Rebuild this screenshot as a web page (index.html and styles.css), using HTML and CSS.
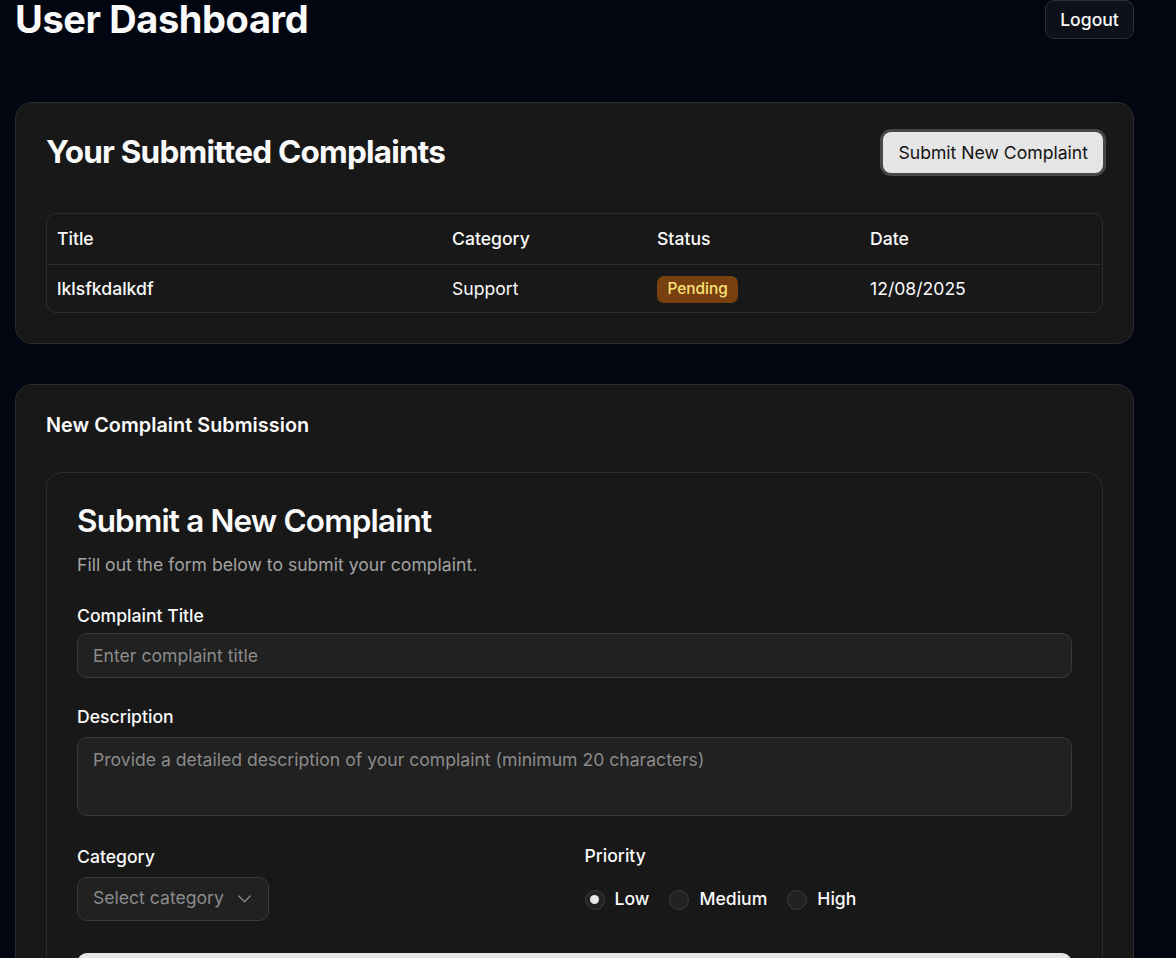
FILE: index.html
```html
<!DOCTYPE html>
<html lang="en">
<head>
<meta charset="utf-8">
<title>User Dashboard</title>
<link rel="stylesheet" href="styles.css">
</head>
<body>
<div class="page">
  <header class="topbar">
    <h1 class="page-title">User Dashboard</h1>
    <button class="btn-logout" type="button">Logout</button>
  </header>

  <section class="card card-complaints">
    <div class="card-head">
      <h2 class="card-title-lg">Your Submitted Complaints</h2>
      <button class="btn-light" type="button">Submit New Complaint</button>
    </div>
    <div class="table">
      <div class="trow thead">
        <div class="cell">Title</div>
        <div class="cell">Category</div>
        <div class="cell">Status</div>
        <div class="cell">Date</div>
      </div>
      <div class="trow tbody">
        <div class="cell cell-strong">lklsfkdalkdf</div>
        <div class="cell">Support</div>
        <div class="cell"><span class="badge-pending">Pending</span></div>
        <div class="cell">12/08/2025</div>
      </div>
    </div>
  </section>

  <section class="card card-new">
    <h3 class="card-title-sm">New Complaint Submission</h3>
    <div class="inner-card">
      <h2 class="form-title">Submit a New Complaint</h2>
      <p class="form-sub">Fill out the form below to submit your complaint.</p>
      <form class="form">
        <div class="field field-title">
          <label class="label" for="title">Complaint Title</label>
          <input class="input" id="title" type="text" placeholder="Enter complaint title">
        </div>
        <div class="field field-desc">
          <label class="label" for="desc">Description</label>
          <textarea class="textarea" id="desc" placeholder="Provide a detailed description of your complaint (minimum 20 characters)"></textarea>
        </div>
        <div class="two-col">
          <div class="field field-cat">
            <label class="label">Category</label>
            <div class="select">
              <span class="select-text">Select category</span>
              <svg class="chev" width="13" height="8" viewBox="0 0 13 8"><polyline points="0.8,1 6.5,6.7 12.2,1" fill="none" stroke="#8a8a8a" stroke-width="1.3" stroke-linecap="round" stroke-linejoin="round"/></svg>
            </div>
          </div>
          <div class="field field-pri">
            <span class="label label-pri">Priority</span>
            <div class="radios">
              <span class="radio-item"><span class="radio radio-on"></span><span class="radio-label">Low</span></span>
              <span class="radio-item"><span class="radio"></span><span class="radio-label">Medium</span></span>
              <span class="radio-item"><span class="radio"></span><span class="radio-label">High</span></span>
            </div>
          </div>
        </div>
        <button class="btn-submit" type="button">Submit Complaint</button>
      </form>
    </div>
  </section>
</div>
</body>
</html>
```

FILE: styles.css
```css
html { scrollbar-width: none; }
* { box-sizing: border-box; }
body {
  margin: 0;
  background: #020611;
  color: #fafafa;
  font-family: "Inter", "Noto Sans", sans-serif;
  font-size: 17.6px;
  line-height: 26.4px;
}
.page {
  width: 1119px;
  margin-left: 15px;
  padding-bottom: 40px;
}
.topbar {
  display: flex;
  justify-content: space-between;
  align-items: flex-start;
  height: 40px;
}
.page-title {
  margin: -1px 0 0 0;
  font-size: 38px;
  line-height: 40px;
  font-weight: 700;
  letter-spacing: -0.4px;
}
.btn-logout {
  height: 39px;
  width: 89px;
  padding: 0;
  background: #0e1119;
  border: 1px solid #2a2e37;
  border-radius: 9px;
  color: #fafafa;
  font-family: inherit;
  font-size: 17.6px;
  font-weight: 500;
}
.card {
  background: #181818;
  border: 1px solid #2d2d2d;
  border-radius: 17px;
  padding: 30px;
}
.card-complaints { margin-top: 62px; }
.card-new { margin-top: 40px; padding-bottom: 30px; }
.card-head {
  display: flex;
  justify-content: space-between;
  align-items: flex-start;
  height: 40px;
}
.card-title-lg {
  margin: 0;
  font-size: 31.5px;
  line-height: 37px;
  font-weight: 700;
  letter-spacing: -0.8px;
}
.btn-light {
  margin-top: -1px;
  height: 41px;
  padding: 0 15px;
  background: #e5e5e5;
  color: #121212;
  border: none;
  border-radius: 8px;
  box-shadow: 0 0 0 3px #474747;
  font-family: inherit;
  font-size: 17.6px;
  font-weight: 400;
}
.table {
  margin-top: 40px;
  border: 1px solid #2d2d2d;
  border-radius: 10px;
  overflow: hidden;
}
.trow {
  display: grid;
  grid-template-columns: 395px 205px 213px 1fr;
  align-items: center;
}
.thead { height: 50px; font-weight: 500; }
.tbody { height: 48px; border-top: 1px solid #2d2d2d; padding-top: 1px; }
.cell { padding: 0 10px; }
.cell-strong { font-weight: 500; }
.badge-pending {
  display: inline-flex;
  align-items: center;
  height: 27px;
  padding: 0 10.5px;
  border-radius: 7px;
  background: #78400e;
  color: #fbe07a;
  font-size: 15.4px;
  font-weight: 500;
  line-height: 1;
}
.card-title-sm {
  margin: 0;
  font-size: 19.8px;
  line-height: 21px;
  font-weight: 600;
  letter-spacing: 0.05px;
}
.inner-card {
  margin-top: 36px;
  border: 1px solid #2d2d2d;
  border-radius: 16px;
  padding: 30px 30px 30px;
}
.form-title {
  margin: 0;
  font-size: 31.5px;
  line-height: 36px;
  font-weight: 600;
  letter-spacing: -0.85px;
}
.form-sub {
  margin: 13px 0 0 0;
  color: #a3a3a3;
}
.form { margin-top: 25px; }
.field { display: flex; flex-direction: column; }
.label { font-weight: 500; }
.field-title .label { margin-bottom: 3px; }
.field-desc { margin-top: 26px; }
.field-desc .label { margin-bottom: 7px; }
.input, .textarea {
  width: 100%;
  background: #212121;
  border: 1px solid #3a3a3a;
  border-radius: 10px;
  color: #fafafa;
  font-family: inherit;
  font-size: 17.6px;
  line-height: 26.4px;
  padding: 0 15px;
  outline: none;
}
.input { height: 45px; }
.textarea {
  height: 79px;
  padding-top: 9px;
  resize: none;
  display: block;
}
.input::placeholder, .textarea::placeholder { color: #8b8b8b; }
.two-col {
  margin-top: 28px;
  display: grid;
  grid-template-columns: 1fr 1fr;
  gap: 20px;
}
.field-cat .label { margin-bottom: 6px; }
.select {
  width: 192px;
  height: 44px;
  display: flex;
  align-items: center;
  gap: 14px;
  padding: 0 15px;
  background: #212121;
  border: 1px solid #3a3a3a;
  border-radius: 10px;
  color: #8b8b8b;
}
.chev { margin-top: 1px; }
.label-pri { margin-top: -1px; }
.radios {
  display: flex;
  gap: 20px;
  margin-top: 8px;
  height: 44px;
  align-items: center;
}
.radio-item { display: inline-flex; align-items: center; gap: 10px; font-weight: 500; }
.radio {
  width: 20px;
  height: 20px;
  border-radius: 50%;
  border: 1px solid #3d3d3d;
  background: #222;
  display: inline-flex;
  align-items: center;
  justify-content: center;
}
.radio-on::after {
  content: "";
  width: 9px;
  height: 9px;
  border-radius: 50%;
  background: #e8e8e8;
}
.btn-submit {
  margin-top: 31px;
  width: 100%;
  height: 44px;
  background: #e5e5e5;
  color: #121212;
  border: none;
  border-radius: 10px;
  font-family: inherit;
  font-size: 17.6px;
  font-weight: 500;
}
```
